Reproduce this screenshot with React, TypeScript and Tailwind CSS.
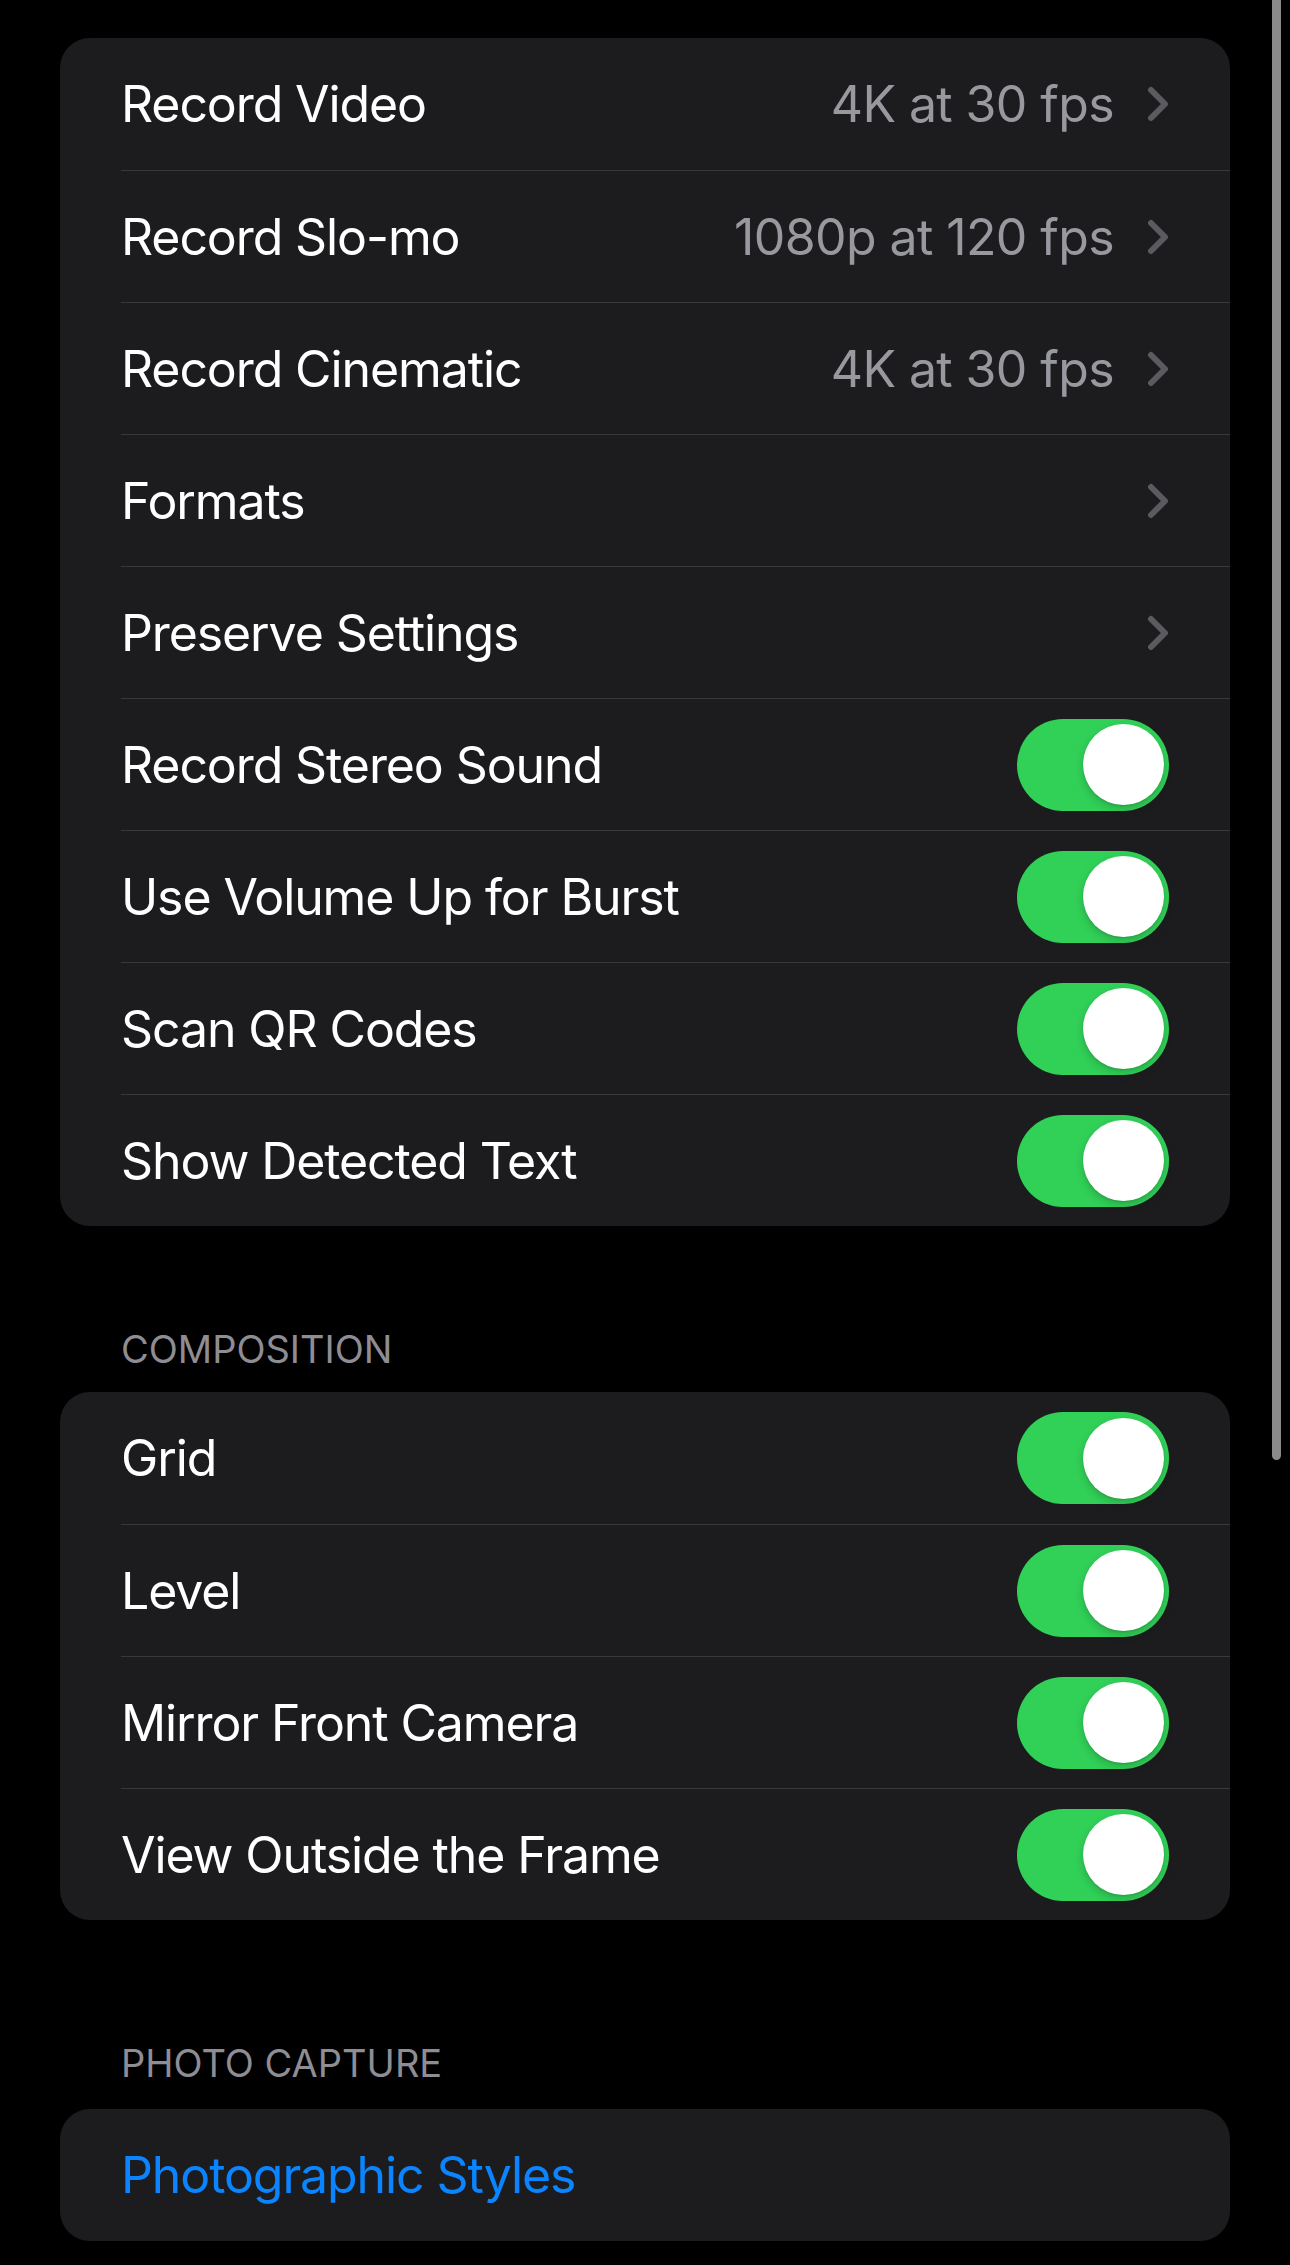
import React from "react";

type Row =
  | { label: string; kind: "value"; value?: string }
  | { label: string; kind: "toggle" }
  | { label: string; kind: "link" };

const card1: Row[] = [
  { label: "Record Video", kind: "value", value: "4K at 30 fps" },
  { label: "Record Slo-mo", kind: "value", value: "1080p at 120 fps" },
  { label: "Record Cinematic", kind: "value", value: "4K at 30 fps" },
  { label: "Formats", kind: "value" },
  { label: "Preserve Settings", kind: "value" },
  { label: "Record Stereo Sound", kind: "toggle" },
  { label: "Use Volume Up for Burst", kind: "toggle" },
  { label: "Scan QR Codes", kind: "toggle" },
  { label: "Show Detected Text", kind: "toggle" },
];

const card2: Row[] = [
  { label: "Grid", kind: "toggle" },
  { label: "Level", kind: "toggle" },
  { label: "Mirror Front Camera", kind: "toggle" },
  { label: "View Outside the Frame", kind: "toggle" },
];

function Chevron() {
  return (
    <svg width="22" height="36" viewBox="0 0 22 36" className="shrink-0">
      <path
        d="M4 4 L18 18 L4 32"
        fill="none"
        stroke="#5a5a5f"
        strokeWidth="6"
        strokeLinecap="round"
        strokeLinejoin="round"
      />
    </svg>
  );
}

function Toggle() {
  return (
    <div className="flex h-[92px] w-[152px] shrink-0 items-center justify-end rounded-full bg-[#31d158] pr-[5px]">
      <div className="h-[81px] w-[81px] rounded-full bg-white shadow-[0_4px_10px_rgba(0,0,0,0.18),0_1px_2px_rgba(0,0,0,0.12)]" />
    </div>
  );
}

function RowView({ row, first }: { row: Row; first: boolean }) {
  return (
    <div
      className={
        "ml-[61px] flex h-[132px] items-center justify-between pr-[61px] " +
        (first ? "" : "border-t border-[#38383a]")
      }
    >
      <span
        className={
          "text-[50px] leading-none tracking-[-1.1px] " +
          (row.kind === "link" ? "text-[#0a84ff]" : "text-white")
        }
      >
        {row.label}
      </span>
      {row.kind === "value" && (
        <div className="flex items-center gap-[33px]">
          {row.value && (
            <span className="text-[50px] leading-none tracking-[-0.6px] text-[#98989f]">
              {row.value}
            </span>
          )}
          <Chevron />
        </div>
      )}
      {row.kind === "toggle" && <Toggle />}
    </div>
  );
}

function Card({ rows }: { rows: Row[] }) {
  return (
    <div className="overflow-hidden rounded-[30px] bg-[#1c1c1e]">
      {rows.map((r, i) => (
        <RowView key={r.label} row={r} first={i === 0} />
      ))}
    </div>
  );
}

function Header({ children }: { children: React.ReactNode }) {
  return (
    <div className="pl-[61px] text-[38px] leading-none uppercase text-[#8d8d93]">
      {children}
    </div>
  );
}

export default function App() {
  return (
    <div className="relative h-[2265px] w-[1290px] overflow-hidden bg-black font-['Inter',sans-serif] antialiased">
      <div className="px-[60px] pt-[38px]">
        <Card rows={card1} />
        <div className="mt-[104px] mb-[24px]">
          <Header>Composition</Header>
        </div>
        <Card rows={card2} />
        <div className="mt-[124px] mb-[27px]">
          <Header>Photo Capture</Header>
        </div>
        <Card rows={[{ label: "Photographic Styles", kind: "link" }]} />
      </div>
      <div className="absolute right-[9px] top-[-40px] h-[1500px] w-[9px] rounded-full bg-[#8a8a8a]" />
    </div>
  );
}
